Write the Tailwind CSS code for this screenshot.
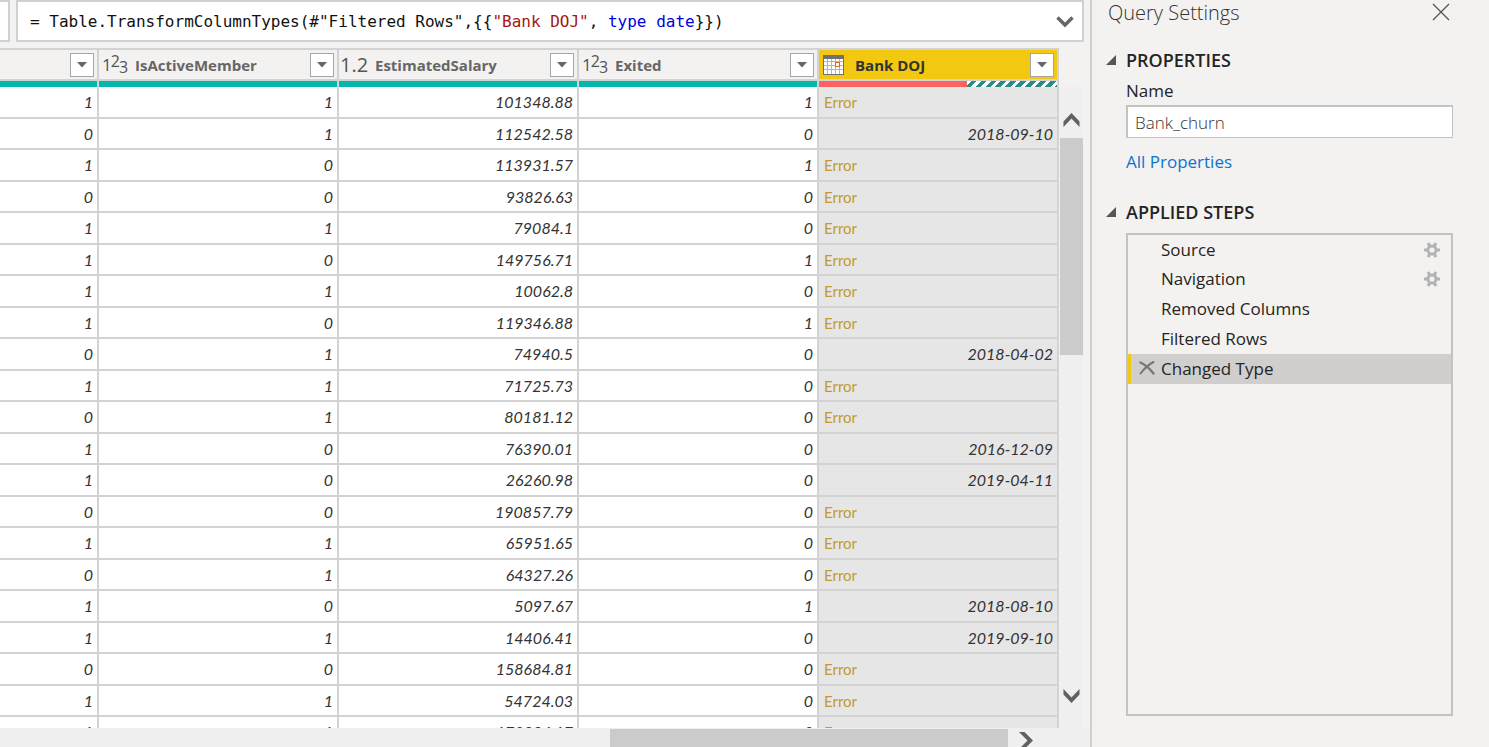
<!DOCTYPE html>
<html lang="en">
<head>
<meta charset="utf-8">
<title>Power Query Editor</title>
<script src="https://cdn.jsdelivr.net/npm/@tailwindcss/browser@4"></script>
</head>
<body class="flex h-screen overflow-hidden bg-[#f3f2f1] font-['Open_Sans','Noto_Sans',sans-serif] text-[#252423]">
<main class="flex min-w-0 flex-1 flex-col border-r-2 border-[#d0cfcd]">
  <div class="flex h-[42px] shrink-0 gap-[6px] pr-[6px]">
    <div class="w-[10px] border-2 border-l-0 border-[#d0d0d0] bg-white"></div>
    <div class="flex min-w-0 flex-1 items-center border-2 border-[#d0d0d0] bg-white pt-[2px] pr-[8px] pl-[12px]">
      <code class="flex-1 overflow-hidden font-['DejaVu_Sans_Mono',monospace] text-[16px] whitespace-pre text-[#111]">= Table.TransformColumnTypes(#"Filtered Rows",{{<span class="text-[#a31515]">"Bank DOJ"</span>, <span class="text-[#0000e0]">type</span> <span class="text-[#0000e0]">date</span>}})</code>
      <button aria-label="Expand formula bar"><svg class="block" width="18" height="12" viewBox="0 0 18 12" fill="none" stroke="#666" stroke-width="3.4"><path d="M1.5 1.5 9 9l7.500-7.500"/></svg></button>
    </div>
  </div>
  <div class="mt-[6px] flex min-h-0 flex-1 gap-px overflow-hidden">
    <div class="w-[1059px] shrink-0 overflow-hidden">
      <table class="w-full table-fixed border-separate border-spacing-0 border-t-2 border-[#d3d3d3]">
        <colgroup><col class="w-[99px]"><col class="w-[240px]"><col class="w-[240px]"><col class="w-[240px]"><col class="w-[240px]"></colgroup>
        <thead><tr id="head"></tr></thead>
        <tbody id="rows"></tbody>
      </table>
    </div>
    <div class="mt-[39px] flex w-[23px] shrink-0 flex-col items-center bg-[#efefef]">
      <button class="flex h-[51px] w-full items-end justify-center pb-[11px]" aria-label="Scroll up"><svg width="17" height="14" viewBox="0 0 18 14" preserveAspectRatio="none"><path d="M9 0 17.500 8.500V14L9 5.500.500 14V8.500z" fill="#606060"/></svg></button>
      <div class="h-[217px] w-full bg-[#cbcbcb]"></div>
      <button class="mt-auto flex h-[51px] w-full items-start justify-center pt-[12px]" aria-label="Scroll down"><svg width="17" height="14" viewBox="0 0 18 14" preserveAspectRatio="none"><path d="M9 14 17.500 5.500V0L9 8.500.500 0V5.500z" fill="#606060"/></svg></button>
    </div>
  </div>
  <div class="flex h-[19px] shrink-0 overflow-hidden bg-[#efefef] pt-px pl-[610px]">
    <div class="w-[398px] bg-[#cbcbcb]"></div>
    <button class="ml-[11px] self-start pt-[3px]" aria-label="Scroll right"><svg class="block" width="14" height="18" viewBox="0 0 14 18"><path d="M0 0h5.500L14 8.500 5.500 17H0l8.500-8.500z" fill="#606060"/></svg></button>
  </div>
</main>

<aside class="w-[397px] shrink-0 pr-[36px]">
  <header class="flex h-[28px] items-start justify-between pl-[16px]">
    <h1 class="text-[20px] leading-[26px] font-light text-[#333]">Query Settings</h1>
    <button class="mt-[3px] mr-[3px]" aria-label="Close"><svg width="18" height="18" viewBox="0 0 18 18" stroke="#555" stroke-width="1.300"><path d="m1 1 16 16M17 1 1 17"/></svg></button>
  </header>
  <section class="mt-[20px] pl-[14px]">
    <h2 class="flex items-center gap-[10px] text-[18px] leading-[24px] font-semibold text-[#252423]"><svg width="10" height="10" viewBox="0 0 10 10"><path d="M10 0v10H0z" fill="#555"/></svg>PROPERTIES</h2>
    <div class="pl-[20px]">
      <label for="name" class="mt-[7px] block text-[17px] leading-[24px]">Name</label>
      <input id="name" value="Bank_churn" class="mt-[2px] block h-[33px] w-full border-2 border-r border-b border-[#c3c3c3] bg-white px-[7px] text-[17px] font-light text-[#333] outline-none">
      <a href="#" class="mt-[12px] block text-[17px] leading-[24px] text-[#0b74d1]">All Properties</a>
    </div>
  </section>
  <section class="mt-[26px] pl-[14px]">
    <h2 class="flex items-center gap-[10px] text-[18px] leading-[24px] font-semibold text-[#252423]"><svg width="10" height="10" viewBox="0 0 10 10"><path d="M10 0v10H0z" fill="#555"/></svg>APPLIED STEPS</h2>
    <ul class="mt-[9px] ml-[20px] h-[calc(100vh-264px)] border-2 border-[#c3c3c3] text-[17px] leading-[30px]" id="steps"></ul>
  </section>
</aside>

<script>
const whole = '<span class="flex w-[24px] items-center text-[17px] leading-none text-[#555]"><span>1</span><span class="-ml-px pb-[7px] text-[16px]">2</span><span class="-ml-px pt-[4px] text-[16px]">3</span></span>';
const decimal = '<span class="-ml-[2px] block w-[28px] text-[20px] leading-none text-[#555]">1.2</span>';
const calendar = '<svg class="ml-px" width="21" height="20" viewBox="0 0 21 20" shape-rendering="crispEdges"><path fill="#fff" d="M0 0h21v20H0z"/><path d="M4.500 4v15M8.500 4v15M12.500 4v15M16.500 4v15M1 6.500h19M1 10.500h19M1 14.500h19" stroke="#b5b5b5"/><path d="M.5.500h20v19H.5z" fill="none" stroke="#707070"/><path fill="#707070" d="M0 0h21v4H0z"/><path d="M12.500 7.500h4v4h-4z" fill="#fff" stroke="#e06c1a"/></svg>';
const cols = [['', ''], [whole, 'IsActiveMember'], [decimal, 'EstimatedSalary'], [whole, 'Exited'], [calendar, 'Bank DOJ']];
document.getElementById('head').innerHTML = cols.map(([icon, name], i) => {
  const last = i === 4;
  const bar = last
    ? '<div class="flex h-[6px]"><div class="w-[148px] bg-[#fd625e]"></div><div class="flex-1 bg-[repeating-linear-gradient(135deg,#ffffff_0_3px,#2a8c84_3px_7px)]"></div></div>'
    : '<div class="h-[6px] bg-[#01b8aa]"></div>';
  return `<th scope="col" class="border-r-2 border-[#d3d3d3] p-0 text-left font-bold"><div class="flex h-[31px] items-center border-b-2 border-[#d3d3d3] pr-[3px] pl-[3px] text-[15px] ${last ? 'bg-[#f2c811] text-[#333]' : 'text-[#666]'}"><span class="w-[33px] shrink-0 font-normal">${icon}</span><span class="flex-1 pt-[2px]">${name}</span><button class="flex size-[24px] shrink-0 items-center justify-center border border-[#a6a6a6] bg-white" aria-label="Filter ${name}"><svg width="10" height="6" viewBox="0 0 10 6"><path d="M0 0h10L5 5.500z" fill="#666"/></svg></button></div>${bar}</th>`;
}).join('');

const E = 'Error';
const data = [
  [1,1,'101348.88',1,E],[0,1,'112542.58',0,'2018-09-10'],[1,0,'113931.57',1,E],[0,0,'93826.63',0,E],
  [1,1,'79084.1',0,E],[1,0,'149756.71',1,E],[1,1,'10062.8',0,E],[1,0,'119346.88',1,E],
  [0,1,'74940.5',0,'2018-04-02'],[1,1,'71725.73',0,E],[0,1,'80181.12',0,E],[1,0,'76390.01',0,'2016-12-09'],
  [1,0,'26260.98',0,'2019-04-11'],[0,0,'190857.79',0,E],[1,1,'65951.65',0,E],[0,1,'64327.26',0,E],
  [1,0,'5097.67',1,'2018-08-10'],[1,1,'14406.41',0,'2019-09-10'],[0,0,'158684.81',0,E],[1,1,'54724.03',0,E],
  [1,1,'170886.17',0,E]
];
document.getElementById('rows').innerHTML = data.map((row, r) =>
  `<tr class="${r % 2 ? 'h-[31px]' : 'h-[32px]'}">` + row.map((v, i) => {
    const look = v === E ? 'text-left text-[15px] text-[#c09a30]' : 'text-right text-[16px] italic text-[#333]';
    return `<td class="border-r-2 border-b-2 border-[#d3d3d3] py-0 pr-[4px] pl-[5px] font-['Lato','Open_Sans',sans-serif] leading-[24px] ${look} ${i === 4 ? 'bg-[#e6e6e6]' : 'bg-white'}">${v}</td>`;
  }).join('') + '</tr>').join('');

const gear = '<button class="ml-auto mr-[11px]" aria-label="Edit settings"><svg class="block" width="16" height="16" viewBox="0 0 16 16"><g stroke="#b3b3b3" stroke-width="3"><path d="M0 8h16M4 1l8 14M12 1 4 15"/></g><circle cx="8" cy="8" r="5.600" fill="#b3b3b3"/><circle cx="8" cy="8" r="2.600" fill="#f3f2f1"/></svg></button>';
const cross = '<button aria-label="Delete step"><svg class="block" width="16" height="14" viewBox="0 0 16 14" fill="none" stroke="#777" stroke-linecap="round"><path d="M1.500 1.500C6 3.500 11 8 14.500 12.500" stroke-width="2.400"/><path d="M14.500 1C9.500 3.500 5 8 1.500 12.500" stroke-width="2"/></svg></button>';
document.getElementById('steps').innerHTML = ['Source', 'Navigation', 'Removed Columns', 'Filtered Rows', 'Changed Type'].map((s, i) =>
  `<li class="flex items-center border-l-3 ${i ? 'h-[30px]' : 'h-[29px]'} ${i === 4 ? 'border-[#f2c811] bg-[#d0cfcd]' : 'border-transparent'}"><span class="w-[30px] shrink-0 pl-[8px]">${i === 4 ? cross : ''}</span><span>${s}</span>${i < 2 ? gear : ''}</li>`).join('');
</script>
</body>
</html>
